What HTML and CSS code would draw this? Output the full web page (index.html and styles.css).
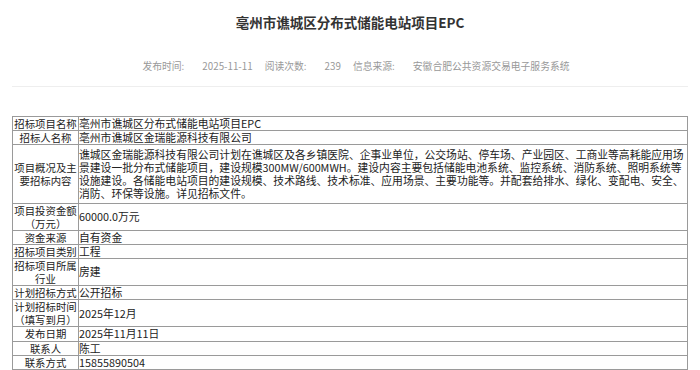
FILE: index.html
```html
<!DOCTYPE html>
<html lang="zh-CN">
<head>
<meta charset="utf-8">
<title>亳州市谯城区分布式储能电站项目EPC</title>
<link rel="stylesheet" href="styles.css">
</head>
<body>
<div class="page">
  <h1 class="title">亳州市谯城区分布式储能电站项目EPC</h1>
  <div class="meta">
    <span class="meta-label">发布时间:</span><span class="meta-value">2025-11-11</span>
    <span class="meta-label">阅读次数:</span><span class="meta-value">239</span>
    <span class="meta-label">信息来源:</span><span class="meta-value">安徽合肥公共资源交易电子服务系统</span>
  </div>
  <div class="divider"></div>
  <table class="info">
    <colgroup><col class="col-label"><col></colgroup>
    <tr><td class="label">招标项目名称</td><td>亳州市谯城区分布式储能电站项目EPC</td></tr>
    <tr><td class="label">招标人名称</td><td>亳州市谯城区金瑞能源科技有限公司</td></tr>
    <tr><td class="label">项目概况及主要招标内容</td><td class="long">谯城区金瑞能源科技有限公司计划在谯城区及各乡镇医院、企事业单位，公交场站、停车场、产业园区、工商业等高耗能应用场景建设一批分布式储能项目，建设规模300MW/600MWH。建设内容主要包括储能电池系统、监控系统、消防系统、照明系统等设施建设。各储能电站项目的建设规模、技术路线、技术标准、应用场景、主要功能等。并配套给排水、绿化、变配电、安全、消防、环保等设施。详见招标文件。</td></tr>
    <tr><td class="label">项目投资金额（万元）</td><td>60000.0万元</td></tr>
    <tr><td class="label">资金来源</td><td>自有资金</td></tr>
    <tr><td class="label">招标项目类别</td><td>工程</td></tr>
    <tr><td class="label">招标项目所属行业</td><td>房建</td></tr>
    <tr><td class="label">计划招标方式</td><td>公开招标</td></tr>
    <tr><td class="label">计划招标时间（填写到月）</td><td>2025年12月</td></tr>
    <tr><td class="label">发布日期</td><td>2025年11月11日</td></tr>
    <tr><td class="label">联系人</td><td>陈工</td></tr>
    <tr><td class="label">联系方式</td><td>15855890504</td></tr>
  </table>
</div>
<div class="footer-strip"></div>
</body>
</html>
```
FILE: styles.css
```css
html, body {
  margin: 0;
  padding: 0;
  background: #fff;
}
body {
  font-family: "Noto Sans CJK SC", "Noto Sans", sans-serif;
  color: #222;
}
.page {
  padding: 0 12px;
}
.title {
  margin: 0;
  padding-top: 12px;
  font-size: 13.5px;
  line-height: 20px;
  font-weight: bold;
  text-align: center;
  color: #333;
}
.meta {
  margin-top: 27px;
  display: flex;
  justify-content: center;
  font-size: 9.8px;
  line-height: 14px;
  color: #999;
  padding-left: 12px;
}
.meta-label {
  margin-right: 18px;
}
.meta-value {
  margin-right: 12px;
}
.meta-value:last-child {
  margin-right: 0;
}
.divider {
  margin-top: 13px;
  height: 1px;
  background: #eeeeee;
}
.info {
  margin-top: 29px;
  width: 676px;
  border-collapse: collapse;
  table-layout: fixed;
  font-size: 10.8px;
  line-height: 13.1px;
  color: #222;
}
.col-label {
  width: 66px;
}
.info td {
  border: 1px solid #9a9a9a;
  padding: 0;
  vertical-align: middle;
}
.info td.label {
  text-align: center;
  font-size: 10.4px;
  padding: 0;
}
.info td.long {
  padding: 2.5px 0;
}
.footer-strip {
  height: 10px;
  background: #ebebeb;
}
```
